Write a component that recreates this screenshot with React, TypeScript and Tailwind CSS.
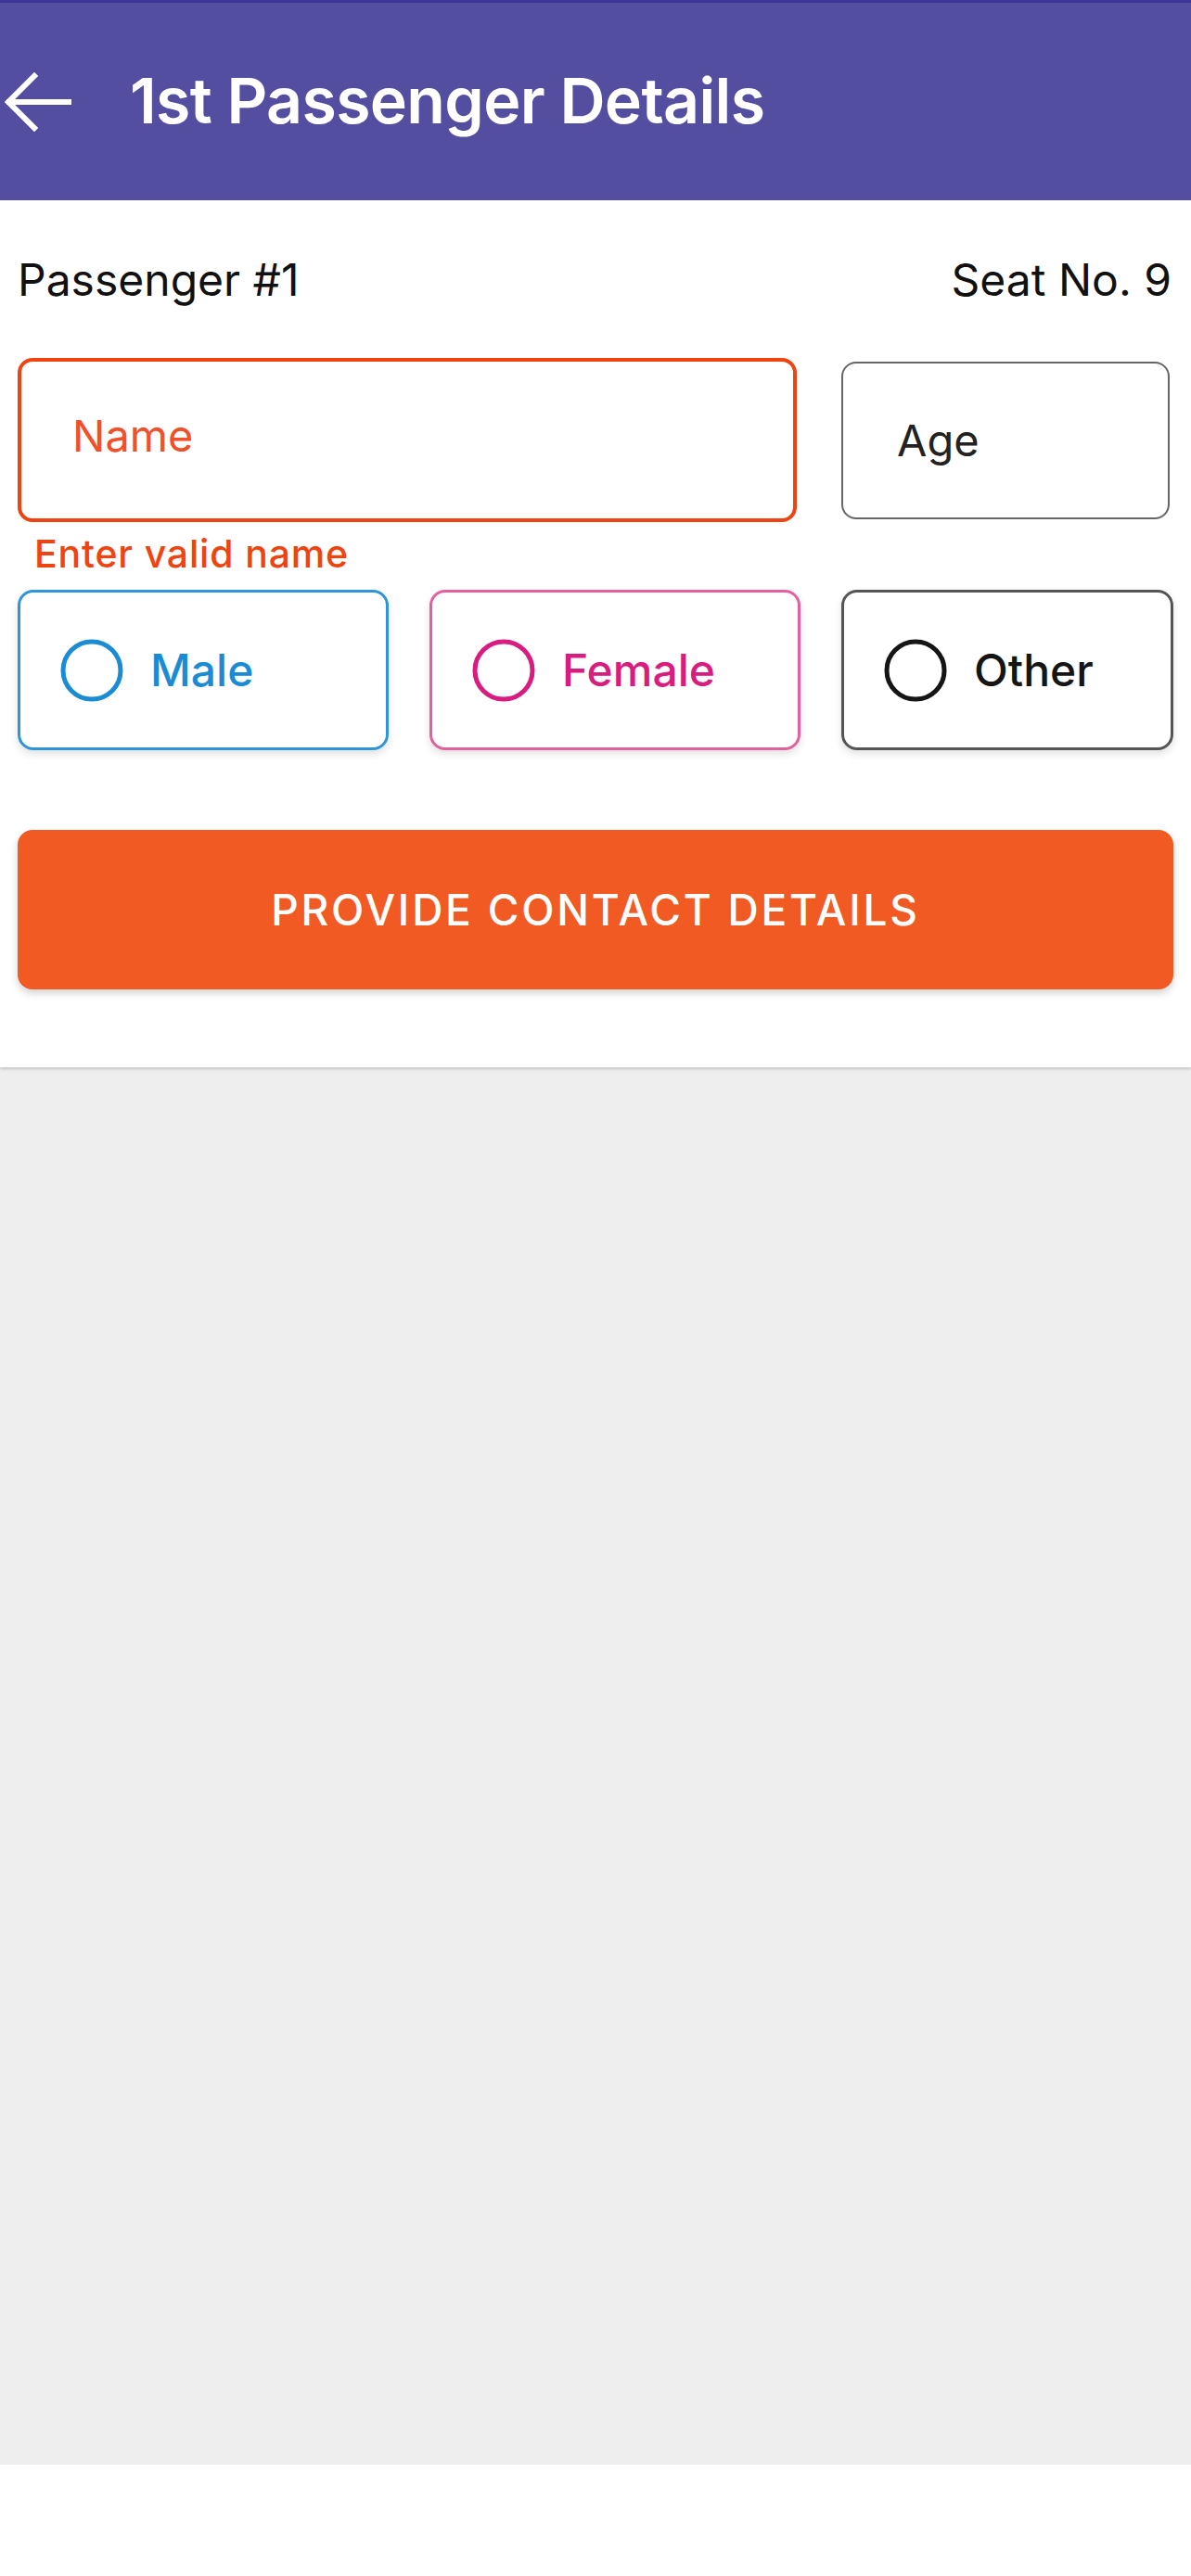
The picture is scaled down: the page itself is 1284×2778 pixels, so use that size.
import React from "react";

function Radio({ color }: { color: string }) {
  return (
    <svg width="70" height="70" viewBox="0 0 70 70" className="shrink-0">
      <circle cx="35" cy="35" r="31" fill="none" stroke={color} strokeWidth="5" />
    </svg>
  );
}

export default function App() {
  const genders = [
    { label: "Male", box: "w-[400px] border-[#2E95D8]", text: "text-[#1A8CD4]", ring: "#1A8CD4" },
    { label: "Female", box: "w-[400px] border-[#E2609E]", text: "text-[#D81C80]", ring: "#D81C80" },
    { label: "Other", box: "flex-1 border-[#555555]", text: "text-[#151515]", ring: "#151515" },
  ];

  return (
    <div className="min-h-[2778px] bg-white font-['Inter',sans-serif]">
      <header className="flex h-[216px] items-center border-t-[3px] border-[#3B3499] bg-[#544EA0]">
        <svg width="76" height="64" viewBox="0 0 76 64" className="ml-[2px] shrink-0">
          <path
            d="M72 32H8M35 4L7 32l28 28"
            fill="none"
            stroke="white"
            strokeWidth="6"
            strokeLinecap="square"
          />
        </svg>
        <h1 className="ml-[62px] mb-[4px] text-[68px] font-semibold leading-none tracking-[-0.01em] text-white">
          1st Passenger Details
        </h1>
      </header>

      <section className="relative z-10 bg-white px-[19px] pt-[62px] pb-[84px] shadow-[0_2px_3px_rgba(0,0,0,0.18)]">
        <div className="flex items-center justify-between pr-[2px] text-[48px] leading-none text-[#111111]">
          <span>Passenger #1</span>
          <span>Seat No. 9</span>
        </div>

        <div className="mt-[60px] flex items-center gap-[48px]">
          <div className="flex h-[177px] w-[840px] items-center rounded-[16px] border-[4px] border-[#EE4411] pl-[55px] pb-[10px]">
            <span className="text-[47px] leading-none text-[#F0502A]">Name</span>
          </div>
          <div className="mr-[4px] flex h-[170px] flex-1 items-center rounded-[16px] border-2 border-[#666666] pl-[58px]">
            <span className="text-[47px] leading-none text-[#222222]">Age</span>
          </div>
        </div>

        <p className="mt-[14px] pl-[18px] text-[41px] font-medium leading-none tracking-[0.02em] text-[#EE4411]">
          Enter valid name
        </p>

        <div className="mt-[18px] flex gap-[44px]">
          {genders.map((g) => (
            <div
              key={g.label}
              className={`flex h-[173px] items-center gap-[28px] rounded-[17px] border-[3px] bg-white pl-[42px] shadow-[0_4px_8px_rgba(0,0,0,0.12)] ${g.box}`}
            >
              <Radio color={g.ring} />
              <span className={`text-[48px] font-medium leading-none ${g.text}`}>{g.label}</span>
            </div>
          ))}
        </div>

        <button className="mt-[86px] flex h-[172px] w-full items-center justify-center rounded-[16px] bg-[#F15A22] text-[46px] font-medium leading-none tracking-[0.06em] text-white shadow-[0_4px_8px_rgba(0,0,0,0.18)]">
          PROVIDE CONTACT DETAILS
        </button>
      </section>

      <div className="h-[1507px] bg-[#EEEEEE]" />
    </div>
  );
}
